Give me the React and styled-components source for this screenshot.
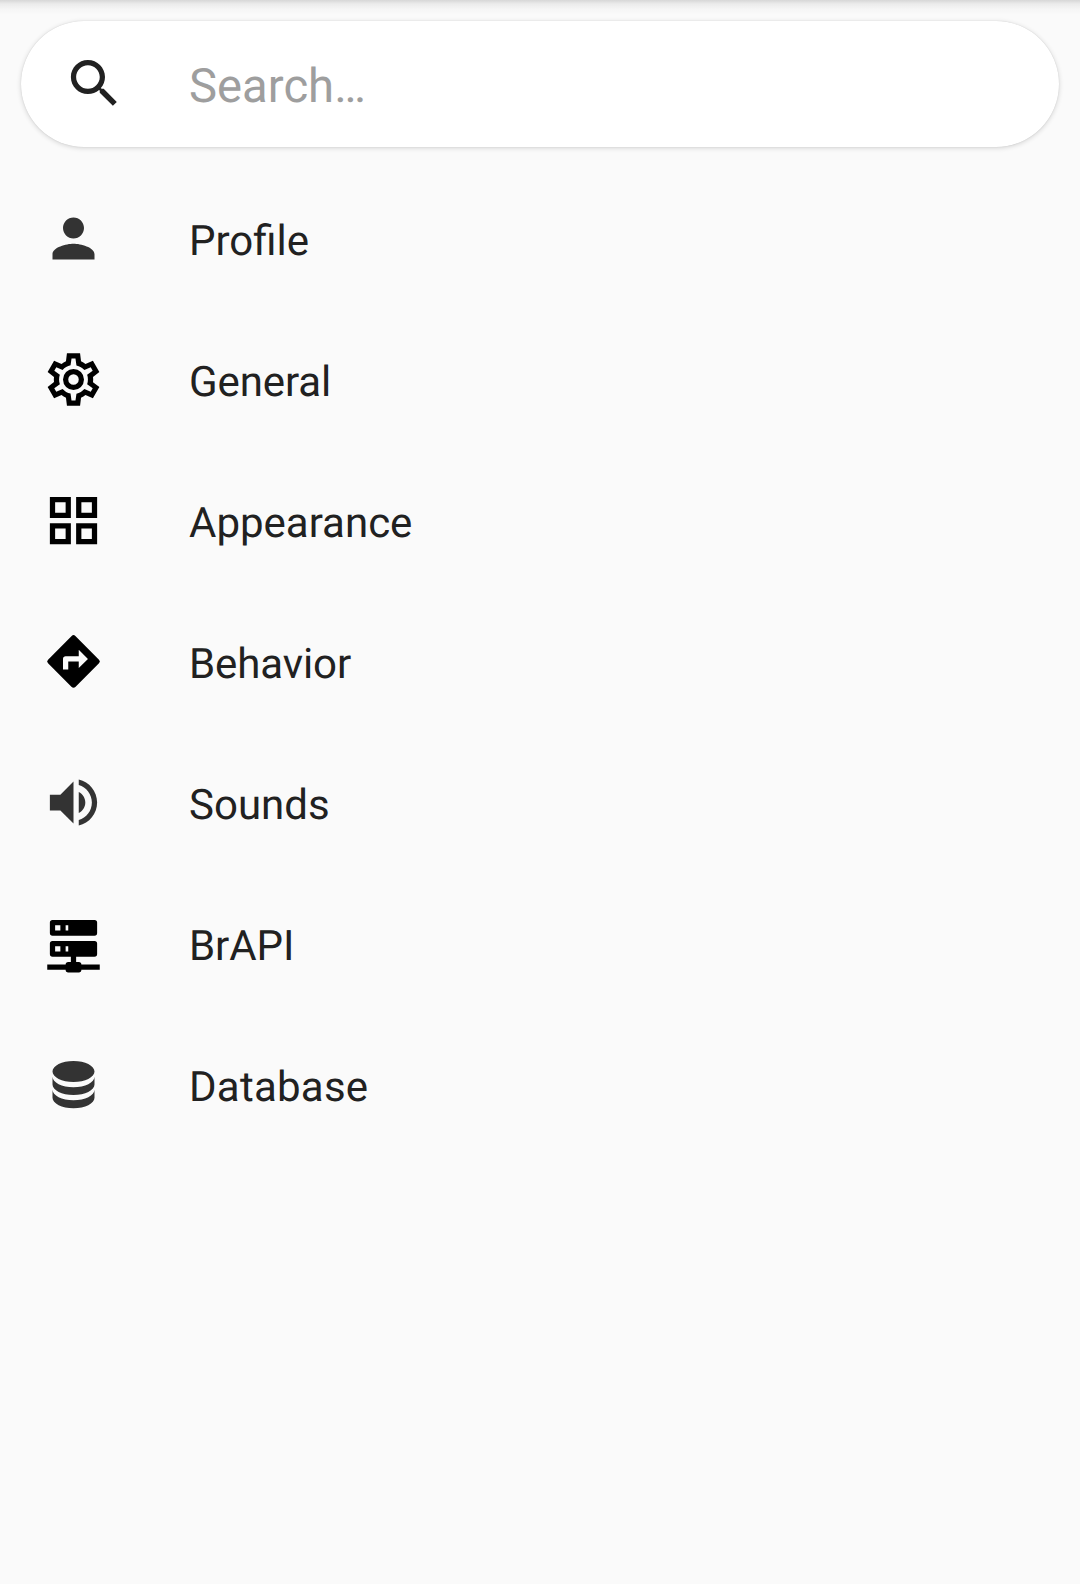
import React from "react";
import styled, { createGlobalStyle } from "styled-components";

const GlobalStyle = createGlobalStyle`
  *, *::before, *::after { box-sizing: border-box; }
  body {
    margin: 0;
    background: #fafafa;
    font-family: Roboto, "Liberation Sans", sans-serif;
    color: #212121;
    text-rendering: geometricPrecision;
  }
`;

const Screen = styled.main`
  min-height: 1584px;
  padding: 21px 21px 0;
  background:
    linear-gradient(rgba(0, 0, 0, 0.14), rgba(0, 0, 0, 0.06) 4px, rgba(0, 0, 0, 0.02) 9px, transparent 15px)
    #fafafa;
`;

const SearchBar = styled.label`
  display: flex;
  align-items: center;
  height: 126px;
  padding: 0 0 1px 42px;
  border-radius: 63px;
  background: #fff;
  box-shadow: 0 1px 5px rgba(0, 0, 0, 0.16), 0 0 1px rgba(0, 0, 0, 0.16);
`;

const SearchInput = styled.input`
  flex: 1;
  min-width: 0;
  margin-left: 63px;
  padding: 5px 0 0;
  border: 0;
  outline: 0;
  background: transparent;
  font: 400 47.25px/56px Roboto, "Liberation Sans", sans-serif;
  color: #212121;
  text-rendering: geometricPrecision;
  &::placeholder { color: #9e9e9e; opacity: 1; }
`;

const Icon = styled.svg`
  flex: none;
  display: block;
  width: 63px;
  height: 63px;
  fill: ${(p) => p.$color};
`;

const Menu = styled.nav`
  display: flex;
  flex-direction: column;
  padding: 21px 0 0 21px;
`;

const MenuItem = styled.a`
  display: flex;
  align-items: center;
  height: 141px;
  gap: 84px;
`;

const Label = styled.span`
  padding-top: 7px;
  font-size: 42px;
  line-height: 50px;
  letter-spacing: ${(p) => p.$tracking || "normal"};
`;

const SEARCH =
  "M15.5 14h-.79l-.28-.27C15.41 12.59 16 11.11 16 9.5 16 5.91 13.09 3 9.5 3S3 5.91 3 9.5 5.91 16 9.5 16c1.61 0 3.09-.59 4.23-1.57l.27.28v.79l5 4.99L20.49 19l-4.99-5zm-6 0C7.01 14 5 11.99 5 9.5S7.01 5 9.5 5 14 7.01 14 9.5 11.99 14 9.5 14z";

const ITEMS = [
  {
    label: "Profile",
    color: "#333",
    path: "M12 12c2.21 0 4-1.79 4-4s-1.79-4-4-4-4 1.79-4 4 1.79 4 4 4zm0 2c-2.67 0-8 1.34-8 4v2h16v-2c0-2.66-5.33-4-8-4z",
  },
  {
    label: "General",
    color: "#000",
    tracking: "-0.1px",
    path: "M12 8A4 4 0 0 1 16 12A4 4 0 0 1 12 16A4 4 0 0 1 8 12A4 4 0 0 1 12 8M12 10A2 2 0 0 0 10 12A2 2 0 0 0 12 14A2 2 0 0 0 14 12A2 2 0 0 0 12 10M9.5 22L9.13 18.93C8.5 18.68 7.96 18.34 7.44 17.94L4.6 19.1L2.15 14.87L4.57 12.97L4.5 12L4.57 11L2.15 9.13L4.6 4.9L7.44 6.05C7.96 5.66 8.5 5.32 9.13 5.07L9.5 2H14.5L14.87 5.07C15.5 5.32 16.04 5.66 16.56 6.05L19.4 4.9L21.85 9.13L19.43 11L19.5 12L19.43 13L21.85 14.87L19.4 19.1L16.56 17.95C16.04 18.34 15.5 18.68 14.87 18.93L14.5 22H9.5M11.25 4L10.88 6.61C9.68 6.86 8.62 7.5 7.85 8.39L5.44 7.35L4.69 8.65L6.8 10.2C6.4 11.37 6.4 12.64 6.8 13.8L4.68 15.36L5.43 16.66L7.86 15.62C8.63 16.5 9.68 17.14 10.87 17.38L11.24 20H12.76L13.13 17.39C14.32 17.14 15.37 16.5 16.14 15.62L18.57 16.66L19.32 15.36L17.2 13.81C17.6 12.64 17.6 11.37 17.2 10.2L19.31 8.65L18.56 7.35L16.15 8.39C15.38 7.5 14.32 6.86 13.12 6.62L12.75 4H11.25Z",
  },
  {
    label: "Appearance",
    color: "#000",
    path: "M3 11H11V3H3M5 5H9V9H5M13 21H21V13H13M15 15H19V19H15M3 21H11V13H3M5 15H9V19H5M13 3V11H21V3M19 9H15V5H19Z",
  },
  {
    label: "Behavior",
    color: "#000",
    tracking: "-0.1px",
    path: "M21.71 11.29l-9-9a.996.996 0 0 0-1.41 0l-9 9a.996.996 0 0 0 0 1.41l9 9c.39.39 1.02.39 1.41 0l9-9a.996.996 0 0 0 0-1.41zM14 14.500V12h-4v3H8v-4c0-.55.45-1 1-1h5V7.500l3.500 3.500-3.500 3.500z",
  },
  {
    label: "Sounds",
    color: "#333",
    path: "M3 9v6h4l5 5V4L7 9H3zm13.500 3c0-1.770-1.020-3.290-2.500-4.030v8.050c1.480-.73 2.500-2.250 2.500-4.020zM14 3.230v2.060c2.890.86 5 3.540 5 6.710s-2.110 5.850-5 6.710v2.060c4.010-.91 7-4.490 7-8.770s-2.990-7.860-7-8.770z",
  },
  {
    label: "BrAPI",
    color: "#000",
    tracking: "-0.1px",
    path: "M13 19H14A1 1 0 0 1 15 20H22V22H15A1 1 0 0 1 14 23H10A1 1 0 0 1 9 22H2V20H9A1 1 0 0 1 10 19H11V17H4A1 1 0 0 1 3 16V12A1 1 0 0 1 4 11H20A1 1 0 0 1 21 12V16A1 1 0 0 1 20 17H13V19M4 3H20A1 1 0 0 1 21 4V8A1 1 0 0 1 20 9H4A1 1 0 0 1 3 8V4A1 1 0 0 1 4 3M9 7H10V5H9V7M9 15H10V13H9V15M5 5V7H7V5H5M5 13V15H7V13H5Z",
  },
  {
    label: "Database",
    color: "#333",
    tracking: "0.25px",
    path: "M12 3C7.58 3 4 4.79 4 7C4 9.21 7.58 11 12 11C16.42 11 20 9.21 20 7C20 4.79 16.42 3 12 3M4 9V12C4 14.21 7.58 16 12 16C16.42 16 20 14.21 20 12V9C20 11.21 16.42 13 12 13C7.58 13 4 11.21 4 9M4 14V17C4 19.21 7.58 21 12 21C16.42 21 20 19.21 20 17V14C20 16.21 16.42 18 12 18C7.58 18 4 16.21 4 14Z",
  },
];

function Glyph({ path, color }) {
  return (
    <Icon viewBox="0 0 24 24" $color={color} aria-hidden="true">
      <path fillRule="evenodd" d={path} />
    </Icon>
  );
}

export default function App() {
  return (
    <>
      <GlobalStyle />
      <Screen>
        <SearchBar>
          <Glyph path={SEARCH} color="#212121" />
          <SearchInput type="text" placeholder="Search…" />
        </SearchBar>
        <Menu>
          {ITEMS.map((item) => (
            <MenuItem key={item.label}>
              <Glyph path={item.path} color={item.color} />
              <Label $tracking={item.tracking}>{item.label}</Label>
            </MenuItem>
          ))}
        </Menu>
      </Screen>
    </>
  );
}
